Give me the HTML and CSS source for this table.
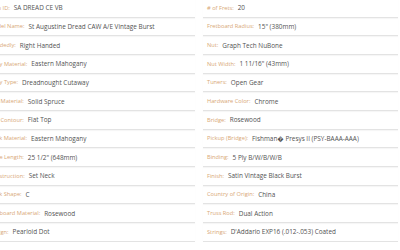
FILE: index.html
```html
<!DOCTYPE html>
<html>
<head>
<meta charset="utf-8">
<link rel="stylesheet" href="styles.css">
</head>
<body>
<div class="specs">
  <ul class="col col-left">
    <li class="row"><span class="lbl">Item ID:</span> <span class="val">SA DREAD CE VB</span></li>
    <li class="row"><span class="lbl">Model Name:</span> <span class="val">St Augustine Dread CAW A/E Vintage Burst</span></li>
    <li class="row"><span class="lbl">Handedly:</span> <span class="val">Right Handed</span></li>
    <li class="row"><span class="lbl">Body Material:</span> <span class="val">Eastern Mahogany</span></li>
    <li class="row"><span class="lbl">Body Type:</span> <span class="val">Dreadnought Cutaway</span></li>
    <li class="row"><span class="lbl">Top Material:</span> <span class="val">Solid Spruce</span></li>
    <li class="row"><span class="lbl">Top Contour:</span> <span class="val">Flat Top</span></li>
    <li class="row"><span class="lbl">Neck Material:</span> <span class="val">Eastern Mahogany</span></li>
    <li class="row"><span class="lbl">Scale Length:</span> <span class="val">25 1/2" (648mm)</span></li>
    <li class="row"><span class="lbl">Construction:</span> <span class="val">Set Neck</span></li>
    <li class="row"><span class="lbl">Neck Shape:</span> <span class="val">C</span></li>
    <li class="row"><span class="lbl">Fretboard Material:</span> <span class="val">Rosewood</span></li>
    <li class="row"><span class="lbl">Design:</span> <span class="val">Pearloid Dot</span></li>
  </ul>
  <ul class="col col-right">
    <li class="row"><span class="lbl"># of Frets:</span> <span class="val">20</span></li>
    <li class="row"><span class="lbl">Fretboard Radius:</span> <span class="val">15" (380mm)</span></li>
    <li class="row"><span class="lbl">Nut:</span> <span class="val">Graph Tech NuBone</span></li>
    <li class="row"><span class="lbl">Nut Width:</span> <span class="val">1 11/16" (43mm)</span></li>
    <li class="row"><span class="lbl">Tuners:</span> <span class="val">Open Gear</span></li>
    <li class="row"><span class="lbl">Hardware Color:</span> <span class="val">Chrome</span></li>
    <li class="row"><span class="lbl">Bridge:</span> <span class="val">Rosewood</span></li>
    <li class="row"><span class="lbl">Pickup (Bridge):</span> <span class="val">Fishman&#xFFFD; Presys II (PSY-BAAA-AAA)</span></li>
    <li class="row"><span class="lbl">Binding:</span> <span class="val">5 Ply B/W/B/W/B</span></li>
    <li class="row"><span class="lbl">Finish:</span> <span class="val">Satin Vintage Black Burst</span></li>
    <li class="row"><span class="lbl">Country of Origin:</span> <span class="val">China</span></li>
    <li class="row"><span class="lbl">Truss Rod:</span> <span class="val">Dual Action</span></li>
    <li class="row"><span class="lbl">Strings:</span> <span class="val">D'Addario EXP16 (.012-.053) Coated</span></li>
  </ul>
</div>
</body>
</html>
```

FILE: styles.css
```css
html, body {
  margin: 0;
  padding: 0;
  background: #ffffff;
  overflow: hidden;
}
body {
  font-family: "Open Sans", "DejaVu Sans", sans-serif;
}
.specs {
  display: grid;
  grid-template-columns: 210px 195px;
  column-gap: 8px;
  margin-left: -15px;
  margin-top: -1px;
}
.col {
  list-style: none;
  margin: 0;
  padding: 0;
}
.row {
  height: 17.67px;
  border-bottom: 1px solid #e3e3e3;
  box-shadow: 0 1px 1px rgba(0,0,0,0.035);
  display: flex;
  align-items: center;
  padding-left: 4px;
  white-space: nowrap;
}
.lbl {
  color: #d8a776;
  font-size: 5.7px;
  margin-right: 4px;
}
.val {
  color: #525252;
  font-size: 6.4px;
}
```
